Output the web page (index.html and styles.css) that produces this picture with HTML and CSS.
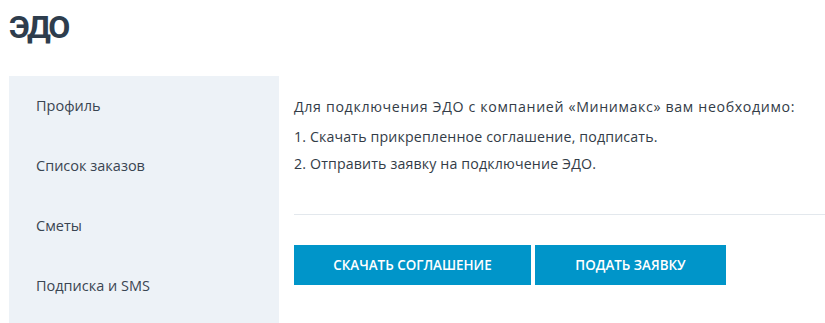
FILE: index.html
```html
<!DOCTYPE html>
<html lang="ru">
<head>
<meta charset="utf-8">
<title>ЭДО</title>
<link rel="stylesheet" href="styles.css">
</head>
<body>
<h1 class="title">ЭДО</h1>
<div class="layout">
  <nav class="sidebar">
    <a class="nav-item" href="#">Профиль</a>
    <a class="nav-item" href="#">Список заказов</a>
    <a class="nav-item" href="#">Сметы</a>
    <a class="nav-item" href="#">Подписка и SMS</a>
  </nav>
  <main class="content">
    <div class="info">
      <p class="lead">Для подключения ЭДО с компанией «Минимакс» вам необходимо:</p>
      <p class="step">1. Скачать прикрепленное соглашение, подписать.</p>
      <p class="step">2. Отправить заявку на подключение ЭДО.</p>
    </div>
    <div class="actions">
      <a class="btn btn-wide" href="#">Скачать соглашение</a>
      <a class="btn btn-narrow" href="#">Подать заявку</a>
    </div>
  </main>
</div>
</body>
</html>
```

FILE: styles.css
```css
* { box-sizing: border-box; }
html, body { margin: 0; padding: 0; background: #fff; overflow: hidden; }
body {
  font-family: "Open Sans", "Noto Sans", sans-serif;
  color: #333c47;
  padding-left: 9px;
}
.title {
  margin: 0;
  padding-top: 5px;
  font-family: Roboto, "Open Sans", sans-serif;
  font-size: 32px;
  line-height: 44px;
  font-weight: 700;
  letter-spacing: -2.2px;
  color: #2e3d4d;
}
.layout {
  display: flex;
  margin-top: 27px;
}
.sidebar {
  width: 270px;
  flex: none;
  background: #edf2f7;
  padding-top: 20px;
  height: 260px;
}
.nav-item {
  display: block;
  padding-left: 27px;
  height: 60px;
  line-height: 20px;
  font-size: 14.5px;
  color: #3a4552;
  text-decoration: none;
}
.content {
  flex: 1;
  padding-left: 15px;
}
.info {
  padding-top: 21px;
  padding-bottom: 40px;
  border-bottom: 1px solid #e3e8ed;
}
.info p {
  margin: 0;
  font-size: 14.2px;
  line-height: 20px;
  color: #333c47;
}
.info .lead { margin-bottom: 10px; letter-spacing: 0.65px; }
.info .step { letter-spacing: 0.15px; }
.info .step + .step { margin-top: 7px; }
.actions {
  display: flex;
  gap: 4px;
  padding-top: 30px;
}
.btn {
  display: flex;
  align-items: center;
  justify-content: center;
  height: 40px;
  background: #0095c9;
  color: #fff;
  text-decoration: none;
  text-transform: uppercase;
  font-size: 13.4px;
  font-weight: 600;
}
.btn-wide { width: 237px; }
.btn-narrow { width: 191px; }
```
